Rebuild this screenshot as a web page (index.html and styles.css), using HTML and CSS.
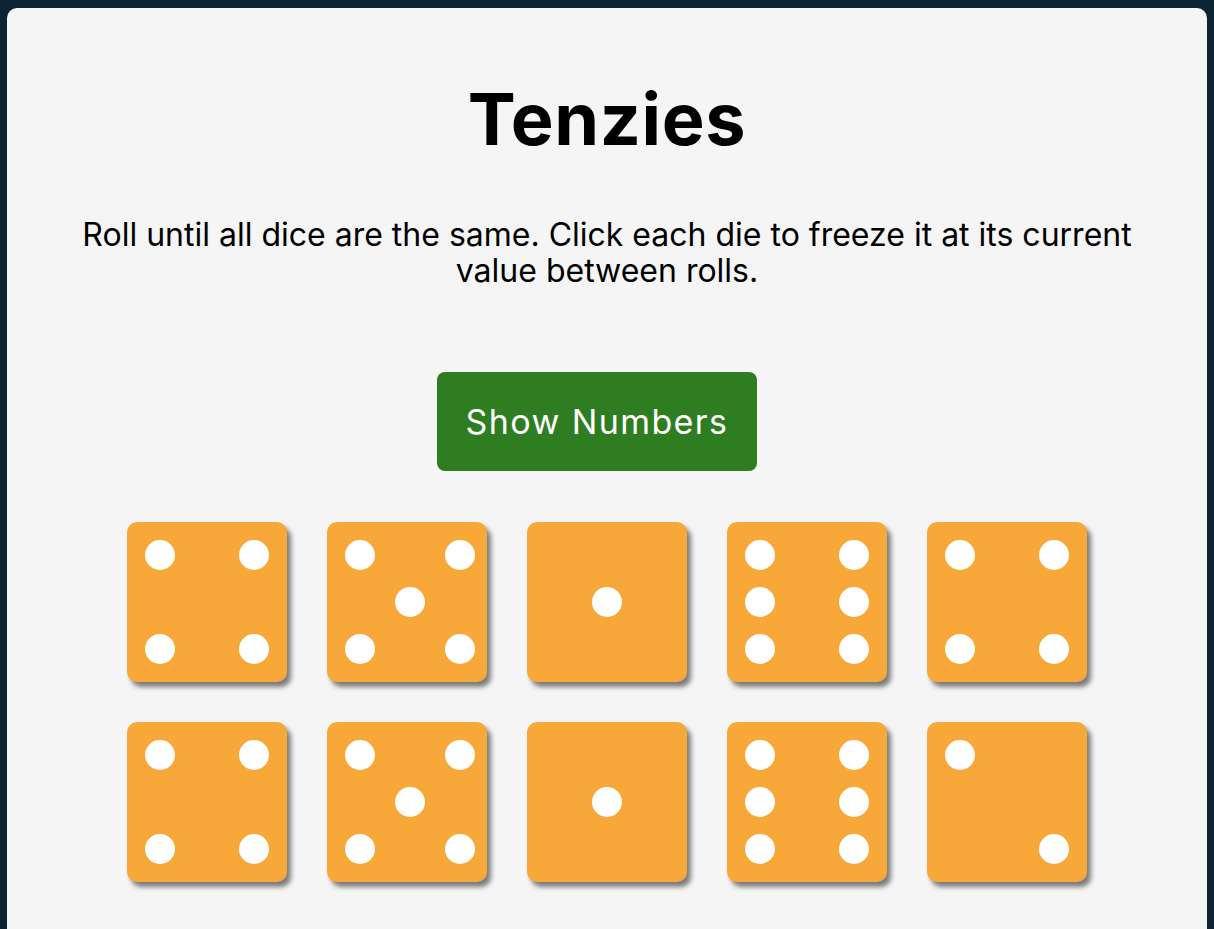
FILE: index.html
```html
<!DOCTYPE html>
<html lang="en">
<head>
<meta charset="utf-8">
<title>Tenzies</title>
<link rel="stylesheet" href="styles.css">
</head>
<body>
<main class="panel">
  <h1 class="title">Tenzies</h1>
  <p class="instructions">Roll until all dice are the same. Click each die to freeze it at its current value between rolls.</p>
  <button class="toggle-btn">Show Numbers</button>
  <div class="dice-grid">
    <div class="die"><span class="dot tl"></span><span class="dot tr"></span><span class="dot bl"></span><span class="dot br"></span></div>
    <div class="die die-five"><span class="dot tl"></span><span class="dot tr"></span><span class="dot c"></span><span class="dot bl"></span><span class="dot br"></span></div>
    <div class="die"><span class="dot c"></span></div>
    <div class="die"><span class="dot tl"></span><span class="dot tr"></span><span class="dot ml"></span><span class="dot mr"></span><span class="dot bl"></span><span class="dot br"></span></div>
    <div class="die"><span class="dot tl"></span><span class="dot tr"></span><span class="dot bl"></span><span class="dot br"></span></div>
    <div class="die"><span class="dot tl"></span><span class="dot tr"></span><span class="dot bl"></span><span class="dot br"></span></div>
    <div class="die die-five"><span class="dot tl"></span><span class="dot tr"></span><span class="dot c"></span><span class="dot bl"></span><span class="dot br"></span></div>
    <div class="die"><span class="dot c"></span></div>
    <div class="die"><span class="dot tl"></span><span class="dot tr"></span><span class="dot ml"></span><span class="dot mr"></span><span class="dot bl"></span><span class="dot br"></span></div>
    <div class="die"><span class="dot tl"></span><span class="dot br"></span></div>
  </div>
</main>
</body>
</html>
```

FILE: styles.css
```css
* { box-sizing: border-box; }

html, body {
  margin: 0;
  height: 100%;
  overflow: hidden;
}

body {
  background: #0b2434;
  padding: 8px 7px 0 7px;
  font-family: Inter, "Noto Sans", sans-serif;
  color: #000;
}

.panel {
  background: #f5f5f5;
  border-radius: 10px;
  min-height: 960px;
  display: flex;
  flex-direction: column;
  align-items: center;
  padding-top: 67px;
}

.title {
  margin: 0;
  font-size: 72px;
  line-height: 87px;
  font-weight: 700;
  letter-spacing: 0.6px;
}

.instructions {
  margin: 55px 0 0 0;
  max-width: 1100px;
  text-align: center;
  font-size: 32px;
  line-height: 36px;
  font-weight: 400;
}

.toggle-btn {
  margin-top: 83px;
  margin-right: 20px;
  width: 320px;
  height: 99px;
  border: none;
  border-radius: 8px;
  background: #2e7d21;
  color: #fff;
  font-family: Inter, "Noto Sans", sans-serif;
  font-size: 34px;
  letter-spacing: 1.4px;
  cursor: pointer;
}

.dice-grid {
  margin-top: 51px;
  display: grid;
  grid-template-columns: repeat(5, 160px);
  gap: 40px;
}

.die {
  width: 160px;
  height: 160px;
  background: #f8a839;
  border-radius: 10px;
  box-shadow: 4px 5px 5px rgba(0, 0, 0, 0.5);
  display: grid;
  grid-template-columns: repeat(3, 30px);
  grid-template-rows: repeat(3, 30px);
  gap: 17px;
  padding: 18px;
}

.die-five {
  column-gap: 20px;
}

.dot {
  background: #fff;
  border-radius: 50%;
}

.tl { grid-area: 1 / 1; }
.tr { grid-area: 1 / 3; }
.ml { grid-area: 2 / 1; }
.c  { grid-area: 2 / 2; }
.mr { grid-area: 2 / 3; }
.bl { grid-area: 3 / 1; }
.br { grid-area: 3 / 3; }
```
